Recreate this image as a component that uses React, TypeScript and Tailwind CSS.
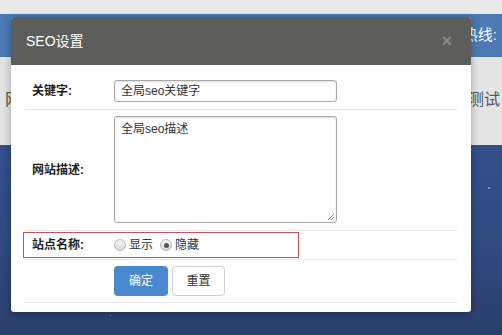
import React from "react";

const font = { fontFamily: '"Liberation Sans", "Noto Sans CJK SC", sans-serif' };

function Radio({ checked }: { checked?: boolean }) {
  return (
    <span className="inline-flex h-[12px] w-[12px] items-center justify-center rounded-full border border-[#b5b5b5] bg-gradient-to-b from-[#f4f4f4] to-[#dcdcdc]">
      {checked && <span className="h-[5px] w-[5px] rounded-full bg-[#555]" />}
    </span>
  );
}

export default function App() {
  return (
    <div className="relative h-[335px] w-[502px] overflow-hidden" style={font}>
      {/* page behind the dialog */}
      <div className="flex h-full flex-col">
        <div className="h-[14px] bg-[#e9e9e9]" />
        <div className="flex h-[43px] items-center justify-end bg-[#4a79b3] pr-[5px]">
          <span className="text-[15px] text-white">热线:</span>
        </div>
        <div className="flex h-[88px] items-center justify-between bg-[#e4e4e4] pb-[2px] pl-[5px] pr-[2px]">
          <span className="text-[16px] text-[#555]">网</span>
          <span className="text-[16px] text-[#555]">测试</span>
        </div>
        <div className="relative flex-1 bg-gradient-to-b from-[#34508a] via-[#304a80] to-[#2b3f6d]">
          <span className="absolute left-[228px] top-[150px] h-[2px] w-[2px] rounded-full bg-white/70" />
          <span className="absolute left-[237px] top-[143px] h-[2px] w-[2px] rounded-full bg-white/60" />
          <span className="absolute left-[407px] top-[148px] h-[2px] w-[2px] rounded-full bg-white/60" />
          <span className="absolute left-[488px] top-[42px] h-[2px] w-[2px] rounded-full bg-white/50" />
          <span className="absolute left-[110px] top-[170px] h-[1px] w-[1px] rounded-full bg-white/60" />
          <span className="absolute left-[340px] top-[165px] h-[1px] w-[1px] rounded-full bg-white/60" />
        </div>
      </div>

      {/* SEO dialog */}
      <div className="absolute left-[11px] top-[17px] w-[460px] overflow-hidden rounded-[3px] bg-white shadow-[0_2px_8px_rgba(0,0,0,0.3)]">
        <div className="flex h-[48px] items-center justify-between bg-[#5d5d5c] pl-[15px] pr-[19px]">
          <span className="text-[14px] text-white">SEO设置</span>
          <span className="text-[18px] font-bold leading-none text-[#8a8a8a]">×</span>
        </div>

        <div className="px-[14px] pb-[9px] pt-[8px] text-[12px] text-[#222]">
          <div className="flex items-center border-b border-[#e8e8e8] py-[7px]">
            <div className="w-[89px] pl-[7px] font-bold">关键字:</div>
            <div className="flex h-[22px] w-[223px] items-center rounded-[3px] border border-[#a9a9a9] px-[6px] text-[#333] shadow-[inset_0_1px_2px_rgba(0,0,0,0.15)]">
              全局seo关键字
            </div>
          </div>

          <div className="flex items-center border-b border-[#e8e8e8] pb-[7px] pt-[6px]">
            <div className="w-[89px] pl-[7px] font-bold">网站描述:</div>
            <div className="relative h-[107px] w-[223px] rounded-[3px] border border-[#a9a9a9] px-[6px] pt-[3px] text-[#333] shadow-[inset_0_1px_2px_rgba(0,0,0,0.15)]">
              全局seo描述
              <svg className="absolute bottom-[1px] right-[1px]" width="9" height="9" viewBox="0 0 9 9">
                <path d="M8 2 L2 8 M8 5 L5 8" stroke="#888" strokeWidth="1" />
              </svg>
            </div>
          </div>

          <div className="flex items-center border-b border-[#e8e8e8] py-[1px]">
            <div className="-ml-[2px] flex h-[26px] w-[276px] items-center border border-[#c8525a]">
              <div className="w-[90px] pl-[8px] font-bold">站点名称:</div>
              <div className="flex items-center gap-[3px] text-[#333]">
                <Radio />
                <span>显示</span>
                <span className="ml-[1px]" />
                <Radio checked />
                <span>隐藏</span>
              </div>
            </div>
          </div>

          <div className="flex items-center gap-[4px] border-b border-[#e8e8e8] pb-[6px] pl-[89px] pt-[6px]">
            <button className="h-[30px] w-[54px] rounded-[4px] bg-[#4a89cf] text-[12px] text-white">确定</button>
            <button className="h-[30px] w-[53px] rounded-[4px] border border-[#cfcfcf] bg-white text-[12px] text-[#333]">重置</button>
          </div>
        </div>
      </div>
    </div>
  );
}
